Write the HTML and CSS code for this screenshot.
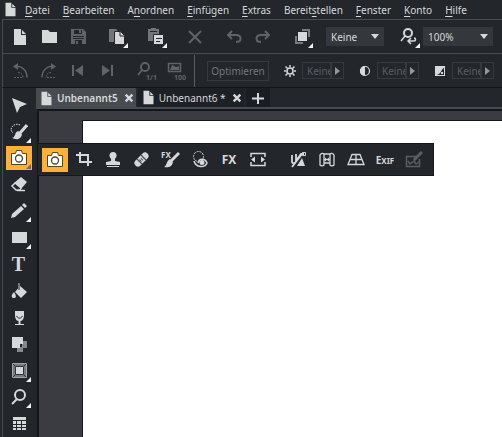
FILE: index.html
```html
<!DOCTYPE html>
<html lang="de">
<head>
<meta charset="utf-8">
<title>Unbenannt5</title>
<link rel="stylesheet" href="styles.css">
</head>
<body>
<svg class="defs" aria-hidden="true">
  <symbol id="doc" viewBox="0 0 18 18"><path fill="currentColor" d="M3 1h7v6h5v10H3z"/><path fill="currentColor" d="M11 2l4 4h-4z"/></symbol>
  <symbol id="camera" viewBox="0 0 18 18"><path fill="#fff" stroke="#55451f" d="M1.500 4.500h4l1-3h5l1 3h4v11h-15z"/><circle cx="9" cy="9.500" r="3.500" fill="#fff" stroke="#55451f" stroke-width="1.300"/></symbol>
  <symbol id="cross" viewBox="0 0 18 18"><path fill="none" stroke="currentColor" stroke-width="2" d="M3 3l12 12M15 3L3 15"/></symbol>
  <symbol id="close" viewBox="0 0 18 18"><path fill="none" stroke="currentColor" stroke-width="3.500" d="M4 4l10 10M14 4L4 14"/></symbol>
  <symbol id="zoom" viewBox="0 0 18 18"><circle cx="10" cy="7" r="5" fill="none" stroke="currentColor" stroke-width="2"/><path stroke="currentColor" stroke-width="2" d="M7 11l-5 5"/></symbol>
</svg>
<div class="app">
  <nav class="menu">
    <svg class="doc-icon"><use href="#doc"/></svg>
    <a href="#"><u>D</u>atei</a>
    <a href="#"><u>B</u>earbeiten</a>
    <a href="#">A<u>n</u>ordnen</a>
    <a href="#"><u>E</u>infügen</a>
    <a href="#"><u>E</u>xtras</a>
    <a href="#">Bereit<u>s</u>tellen</a>
    <a href="#"><u>F</u>enster</a>
    <a href="#"><u>K</u>onto</a>
    <a href="#"><u>H</u>ilfe</a>
  </nav>

  <div class="bar">
    <div class="group">
      <button aria-label="Neu"><svg><use href="#doc"/></svg></button>
      <button aria-label="Öffnen"><svg viewBox="0 0 18 18"><path fill="currentColor" d="M2 2h6l2 2h7v11H2z"/></svg></button>
      <button class="off" aria-label="Speichern"><svg viewBox="0 0 18 18"><path fill="currentColor" fill-rule="evenodd" d="M2 1h12l3 3v12H2zM5 2v4h8V2zM4 8v1h11V8zM4 10v1h11v-1zM6 12v4h7v-4z"/><path fill="currentColor" d="M10 2h2v3h-2zM7 13h2v3H7z"/></svg></button>
    </div>
    <button class="more" aria-label="Kopieren"><svg viewBox="0 0 18 18"><path fill="#73767a" d="M1 1h7l3 3v10H1z"/><path fill="currentColor" stroke="#23262b" d="M6.500 3.500h6l4 4v9h-10z"/><path stroke="#23262b" fill="none" d="M12 4v4h4"/></svg></button>
    <button class="more" aria-label="Einfügen"><svg viewBox="0 0 18 18"><path fill="#73767a" d="M1 1h3V0h5v1h3v12H1z"/><path stroke="#23262b" d="M3 3.500h7"/><path fill="currentColor" stroke="#23262b" d="M6.500 6.500h10v10h-10z"/><path stroke="#23262b" d="M9 10.500h6M9 13.500h4"/></svg></button>
    <button class="off" aria-label="Löschen"><svg><use href="#cross"/></svg></button>
    <div class="group">
      <button class="off" aria-label="Rückgängig"><svg viewBox="0 0 18 18"><path fill="none" stroke="currentColor" stroke-width="2" d="M7 3L3 7l4 4M3 7h8c6 0 6 7 0 7"/></svg></button>
      <button class="off" aria-label="Wiederholen"><svg viewBox="0 0 18 18"><path fill="none" stroke="currentColor" stroke-width="2" d="M11 3l4 4-4 4M15 7H7c-6 0-6 7 0 7"/></svg></button>
    </div>
    <button class="more" aria-label="Anordnen"><svg viewBox="0 0 18 18"><path fill="none" stroke="#777a7e" stroke-width="2" d="M9 2h7v7M3 8v7h7"/><path fill="currentColor" d="M5 4h9v9H5z"/></svg></button>
    <span class="select"><select aria-label="Qualität"><option>Keine</option></select></span>
    <div class="group">
      <button class="more" aria-label="Zoom"><svg viewBox="0 0 18 18"><circle cx="8" cy="5" r="4" fill="none" stroke="currentColor" stroke-width="2"/><path fill="none" stroke="currentColor" stroke-width="1.500" d="M5 8l-4 5M11 10l-3 3 3 3M8 13h6c2 0 2-3 0-3"/></svg></button>
      <span class="select wide"><select aria-label="Zoomstufe"><option>100%</option></select></span>
    </div>
  </div>

  <div class="bar">
    <div class="group">
      <button class="off" aria-label="Links drehen"><svg viewBox="0 0 18 18"><path fill="none" stroke="currentColor" stroke-width="1.500" d="M4 4.500c7-1 12 4 12 11"/><path fill="currentColor" d="M2 4.500L7 1v7z"/><path fill="none" stroke="currentColor" stroke-dasharray="2 1" d="M3 15.500h9c0-3-2-5-5-5"/></svg></button>
      <button class="off" aria-label="Rechts drehen"><svg viewBox="0 0 18 18"><path fill="none" stroke="currentColor" stroke-width="1.500" d="M14 4.500C7 3.500 2 8.500 2 15.500"/><path fill="currentColor" d="M16 4.500L11 1v7z"/><path fill="none" stroke="currentColor" stroke-dasharray="2 1" d="M15 15.500H6c0-3 2-5 5-5"/></svg></button>
      <button class="off" aria-label="Vorheriges Bild"><svg viewBox="0 0 18 18"><path fill="currentColor" d="M3 3h2v11H3zM14 3v11L6 8.500z"/></svg></button>
      <button class="off" aria-label="Nächstes Bild"><svg viewBox="0 0 18 18"><path fill="currentColor" d="M13 3h2v11h-2zM4 3v11l8-5.500z"/></svg></button>
    </div>
    <div class="group">
      <button class="off badge" aria-label="Originalgröße"><svg viewBox="0 0 18 18"><circle cx="8" cy="5" r="4" fill="none" stroke="currentColor" stroke-width="1.800"/><path stroke="currentColor" stroke-width="1.800" d="M5 8l-4 5"/></svg><small>1/1</small></button>
      <button class="off badge" aria-label="Ansicht 100"><svg viewBox="0 0 18 18"><path fill="none" stroke="currentColor" stroke-width="1.500" d="M2.500 1.500h12v8h-12z"/><path fill="currentColor" d="M4 8l2-5 4 2 3-1v4z"/></svg><small>100</small></button>
    </div>
    <div class="adjust">
      <button class="optimize">Optimieren</button>
      <label class="field"><svg viewBox="0 0 18 18"><circle cx="9" cy="9" r="3" fill="none" stroke="currentColor" stroke-width="1.500"/><path stroke="currentColor" stroke-width="1.500" d="M9 3v2M9 13v2M3 9h2M13 9h2M4.500 4.500l2 2M11.500 11.500l2 2M13.500 4.500l-2 2M6.500 11.500l-2 2"/></svg><input value="Keine" aria-label="Helligkeit"><button class="step" aria-label="Helligkeit wählen"></button></label>
      <label class="field"><svg viewBox="0 0 18 18"><circle cx="9" cy="9" r="4.500" fill="none" stroke="currentColor" stroke-width="1.200"/><path fill="currentColor" d="M9 4a5 5 0 0 0 0 10z"/></svg><input value="Keine" aria-label="Kontrast"><button class="step" aria-label="Kontrast wählen"></button></label>
      <label class="field"><svg viewBox="0 0 18 18"><path fill="currentColor" d="M4 4h10v10H4z"/><path fill="#23262b" d="M13 6v7H5c5 0 5-6 8-7z"/><path fill="currentColor" d="M10 10h2v2h-2z"/></svg><input value="Keine" aria-label="Gamma"><button class="step" aria-label="Gamma wählen"></button></label>
    </div>
  </div>

  <div class="work">
    <aside class="tools">
      <button aria-label="Auswahl"><svg viewBox="0 0 18 18"><path fill="currentColor" d="M2 2l15 6-7 3-3 6z"/></svg></button>
      <button class="more" aria-label="Auswahlpinsel"><svg viewBox="0 0 18 18"><path fill="none" stroke="currentColor" stroke-dasharray="1.500 1" d="M10 2C4-1-2 6 3 10"/><path stroke="currentColor" stroke-width="3" d="M17 2l-7 8"/><path fill="currentColor" d="M8 8l4 3c-1 6-6 6-10 4 4-1 2-5 6-7z"/></svg></button>
      <button class="more active" aria-label="Fotobearbeitung"><svg><use href="#camera"/></svg></button>
      <button aria-label="Radierer"><svg viewBox="0 0 18 18"><path fill="currentColor" d="M11 1l6 5-6 7-7-6z"/><path fill="none" stroke="currentColor" stroke-width="1.500" d="M5 7l-3 3 4 4h4l1-2M7 14.500h8"/></svg></button>
      <button class="more" aria-label="Stift"><svg viewBox="0 0 18 18"><path fill="currentColor" d="M1 16l1-4 9-8 3 3-9 8zM12 3l2-2 3 3-2 2z"/></svg></button>
      <button class="more" aria-label="Rechteck"><svg viewBox="0 0 18 18"><path fill="currentColor" d="M2 3h15v11H2z"/></svg></button>
      <button aria-label="Text"><span class="glyph">T</span></button>
      <button aria-label="Füllung"><svg viewBox="0 0 18 18"><path fill="currentColor" d="M10 4l7 6-6 6-6-6zM4 10c3 4 2 6 0 6s-4-2 0-6z"/><path stroke="#777a7e" stroke-width="2" d="M9 1v7"/></svg></button>
      <button aria-label="Transparenz"><svg viewBox="0 0 18 18"><path fill="currentColor" d="M5 2h9v5c0 3-2 5-3.500 5v3H14v1H5v-1h3.500v-3C7 12 5 10 5 7z"/><path fill="none" stroke="#23262b" d="M6.500 7c2 3 4 3 6 0"/></svg></button>
      <button aria-label="Schatten"><svg viewBox="0 0 18 18"><path fill="#85888b" d="M12 6h5v7h-4v4H7v-5h5z"/><path fill="currentColor" d="M2 2h11v7h-3v4H2z"/></svg></button>
      <button class="more" aria-label="Rahmen"><svg viewBox="0 0 18 18"><path fill="#777a7e" stroke="#a3a5a8" d="M2.500 1.500h14v14h-14z"/><path fill="currentColor" stroke="#303338" d="M5.500 4.500h8v8h-8z"/><path stroke="#303338" d="M3 2l2 2M16 2l-2 2M3 15l2-2M16 15l-2-2"/></svg></button>
      <button class="more" aria-label="Lupe"><svg><use href="#zoom"/></svg></button>
      <button aria-label="Tabelle"><svg viewBox="0 0 18 18"><path fill="currentColor" d="M3 2h13v3H3zM3 6h3v3H3zM7 6h4v3H7zM12 6h4v3h-4zM3 10h3v2H3zM7 10h4v2H7zM12 10h4v2h-4zM3 13h3v2H3zM7 13h4v2H7zM12 13h4v2h-4z"/></svg></button>
    </aside>
    <main class="docs">
      <div class="tabs">
        <div class="tab current"><svg class="doc-icon"><use href="#doc"/></svg><span>Unbenannt5</span><button aria-label="Unbenannt5 schließen"><svg><use href="#close"/></svg></button></div>
        <div class="tab"><svg class="doc-icon"><use href="#doc"/></svg><span>Unbenannt6 *</span><button aria-label="Unbenannt6 schließen"><svg><use href="#close"/></svg></button></div>
        <button class="add" aria-label="Neuer Tab"><svg viewBox="0 0 18 18"><path stroke="currentColor" stroke-width="2" d="M9 4v11M3 9.500h12"/></svg></button>
      </div>
      <div class="canvas"><div class="page"></div></div>
      <div class="flyout">
        <button class="active" aria-label="Foto"><svg><use href="#camera"/></svg></button>
        <button aria-label="Zuschneiden"><svg viewBox="0 0 18 18"><path fill="none" stroke="currentColor" stroke-width="2" d="M1 4h12v11M5 1v10h12"/></svg></button>
        <button aria-label="Klonen"><svg viewBox="0 0 18 18"><circle cx="9" cy="4.500" r="3.500" fill="currentColor"/><path fill="currentColor" d="M7 6h4v4l5 1v3H2v-3l5-1zM3 15h12v1H3z"/></svg></button>
        <button aria-label="Reparieren"><svg viewBox="0 0 18 18"><path stroke="currentColor" stroke-width="7" stroke-linecap="round" d="M5 12l7-7"/><path stroke="#4e5155" stroke-width="1.200" d="M4 8l5 5M8 4l5 5"/><path stroke="#4e5155" stroke-width="3" stroke-dasharray="1 1" d="M7 10l3-3"/></svg></button>
        <button class="brush" aria-label="Effektpinsel"><svg viewBox="0 0 18 18"><path stroke="currentColor" stroke-width="3" d="M17 2l-8 8"/><path fill="currentColor" d="M8 8l3 3c-1 5-5 6-9 5 3-1 2-6 6-8z"/></svg><small>FX</small></button>
        <button aria-label="Rote Augen"><svg viewBox="0 0 18 18"><circle cx="7.500" cy="5.500" r="5" fill="none" stroke="currentColor" stroke-dasharray="2 1"/><path fill="none" stroke="currentColor" stroke-width="1.500" d="M3 10c2 7 11 7 13 2-2-5-8-5-9 0"/><circle cx="11" cy="11.500" r="2.500" fill="currentColor"/></svg></button>
        <button aria-label="Effekte"><b>FX</b></button>
        <button aria-label="Größe"><svg viewBox="0 0 18 18"><path fill="none" stroke="currentColor" stroke-width="1.500" d="M2 6V2.500h14V6M2 11v3.500h14V11"/><path fill="currentColor" d="M2 8.500l4-3v6zM16 8.500l-4-3v6z"/></svg></button>
        <button class="apart" aria-label="Ausrichten"><svg viewBox="0 0 18 18"><path fill="none" stroke="currentColor" stroke-width="1.800" d="M3 4v7c1 2 3 2 4-1l5-7h3M7 3v8M3 16L13 3"/><path fill="none" stroke="currentColor" d="M13.500 1.500v3h3v-3z"/><path fill="currentColor" d="M8 15l5-8 3 8z"/></svg></button>
        <button aria-label="Verzerrung"><svg viewBox="0 0 18 18"><path fill="none" stroke="currentColor" stroke-width="1.300" d="M2 4c1-2 3-2 4-1h6c1-1 3-1 4 1v10c-1 1-3 1-4 0v-2H6v2c-1 1-3 1-4 0zM6 3v9M12 3v9M7 8.500h4"/><path fill="currentColor" d="M6 8.500l2-2v4zM12 8.500l-2-2v4z"/></svg></button>
        <button aria-label="Perspektive"><svg viewBox="0 0 18 18"><path fill="none" stroke="currentColor" stroke-width="1.300" d="M5 3.500h8l4 10H1zM9 4v9M3 8.500h12"/></svg></button>
        <button class="exif">E<small>XIF</small></button>
        <button class="dim" aria-label="Bearbeiten"><svg viewBox="0 0 18 18"><path fill="none" stroke="currentColor" stroke-width="1.500" d="M11 5.500H1.500v10h13V8M3 10l2 3 4-3 2 3 3-2"/><path stroke="currentColor" stroke-width="3" d="M17 1l-8 8"/></svg></button>
      </div>
    </main>
  </div>
</div>
</body>
</html>
```
FILE: styles.css
```css
* { box-sizing: border-box; }

body {
  margin: 0;
  background: #23262b;
  color: #d6d8da;
  font: 10px/16px "Noto Sans", "Open Sans", sans-serif;
}

button, input, select {
  margin: 0;
  padding: 0;
  border: 0;
  background: none;
  color: inherit;
  font: inherit;
}

svg { display: block; flex: none; width: 18px; height: 18px; }
.defs { position: absolute; width: 0; height: 0; }

.app { display: flex; flex-direction: column; height: 100vh; overflow: hidden; }

.menu { display: flex; align-items: center; gap: 13px; height: 19px; padding-left: 3px; }
.menu a { color: inherit; text-decoration: none; white-space: nowrap; }
.menu u { text-underline-offset: 2px; }
.menu .doc-icon { margin-right: -6px; }
.doc-icon { width: 15px; height: 15px; }

.bar {
  display: flex;
  align-items: center;
  gap: 10px;
  height: 34px;
  margin-left: 2px;
  padding-left: 2px;
  border-top: 1px solid #494c50;
  border-left: 1px solid #494c50;
}
.group { display: flex; align-items: center; }
.bar > button, .group > button {
  position: relative;
  display: flex;
  align-items: center;
  justify-content: center;
  flex: none;
  width: 29px;
  height: 26px;
}
.off { color: #606367; }
.more { position: relative; }
.more::after {
  content: "";
  position: absolute;
  right: 3px;
  bottom: 2px;
  border-left: 5px solid transparent;
  border-bottom: 5px solid #f4f4f4;
}

.select { position: relative; width: 58px; }
.select.wide { width: 70px; }
.select select {
  display: block;
  appearance: none;
  width: 100%;
  height: 19px;
  padding-left: 5px;
  background: #34373c;
}
.select::after {
  content: "";
  position: absolute;
  right: 5px;
  top: 7px;
  border: 4px solid transparent;
  border-top: 5px solid #d6d8da;
  border-bottom: 0;
}

.badge small {
  position: absolute;
  right: 3px;
  bottom: 2px;
  font-size: 7px;
  font-weight: bold;
  line-height: 8px;
}

.adjust {
  display: flex;
  align-items: center;
  gap: 12px;
  height: 32px;
  margin-left: -5px;
  padding-left: 12px;
  border-left: 1px solid #5a5d61;
}
.optimize { width: 62px; height: 20px; border: 1px solid #363a3e; color: #73767a; }
.field { display: flex; align-items: center; height: 17px; }
.field svg { margin-right: 3px; }
.field input {
  width: 29px;
  height: 17px;
  padding-left: 4px;
  border: 1px solid #363a3e;
  color: #5b5e62;
}
.step { display: grid; place-items: center; width: 13px; height: 17px; border: 1px solid #363a3e; }
.step::before { content: ""; border: 4px solid transparent; border-left: 5px solid #93969a; border-right: 0; }

.work {
  display: flex;
  flex: 1;
  min-height: 0;
  margin-left: 2px;
  border-top: 1px solid #111317;
  border-left: 1px solid #494c50;
}
.tools {
  display: flex;
  flex-direction: column;
  align-items: center;
  justify-content: space-between;
  width: 33px;
  padding: 5px 2px 1px 0;
}
.tools button, .flyout button {
  position: relative;
  display: grid;
  place-items: center;
  flex: none;
  width: 26px;
  height: 24px;
}
.tools .more::after { right: 1px; bottom: 1px; }
.tools .active::after { border-bottom-color: #6b6e72; }
.active { background: #fbb03b; }
.glyph { font: bold 20px/20px "Liberation Serif", serif; }

.docs { position: relative; display: flex; flex: 1; flex-direction: column; min-width: 0; }
.tabs { display: flex; gap: 2px; height: 21px; padding-bottom: 1px; border-bottom: 2px solid #484b50; }
.tab { display: flex; align-items: center; gap: 3px; height: 19px; padding: 0 1px 0 3px; background: #1d2024; white-space: nowrap; }
.tab.current { height: 20px; background: #484b50; font-weight: 600; }
.tab button { padding-left: 2px; }
.tab button svg { width: 12px; height: 12px; }
.add { display: grid; place-items: center; width: 24px; height: 19px; background: #1a1d21; }

.canvas {
  display: flex;
  flex: 1;
  margin-left: 1px;
  padding: 9px 0 0 43px;
  border-top: 2px solid #14161a;
  border-left: 2px solid #14161a;
  background: #3a3c41;
}
.page { flex: 1; border: 1px solid #14161a; border-width: 1px 0 0 1px; background: #fff; }

.flyout {
  position: absolute;
  left: 1px;
  top: 55px;
  display: flex;
  align-items: center;
  gap: 3px;
  height: 33px;
  padding: 0 6px 0 4px;
  border: 1px solid #14161a;
  background: #23262b;
}
.flyout .apart { margin-left: 11px; }
.flyout b { font-size: 12px; }
.brush small { position: absolute; left: 3px; top: 3px; font-size: 8px; font-weight: bold; line-height: 8px; }
.flyout .exif { display: flex; justify-content: center; align-items: baseline; font-weight: bold; line-height: 24px; }
.exif small { font-size: 8px; }
.dim { color: #5b5e62; }
```
